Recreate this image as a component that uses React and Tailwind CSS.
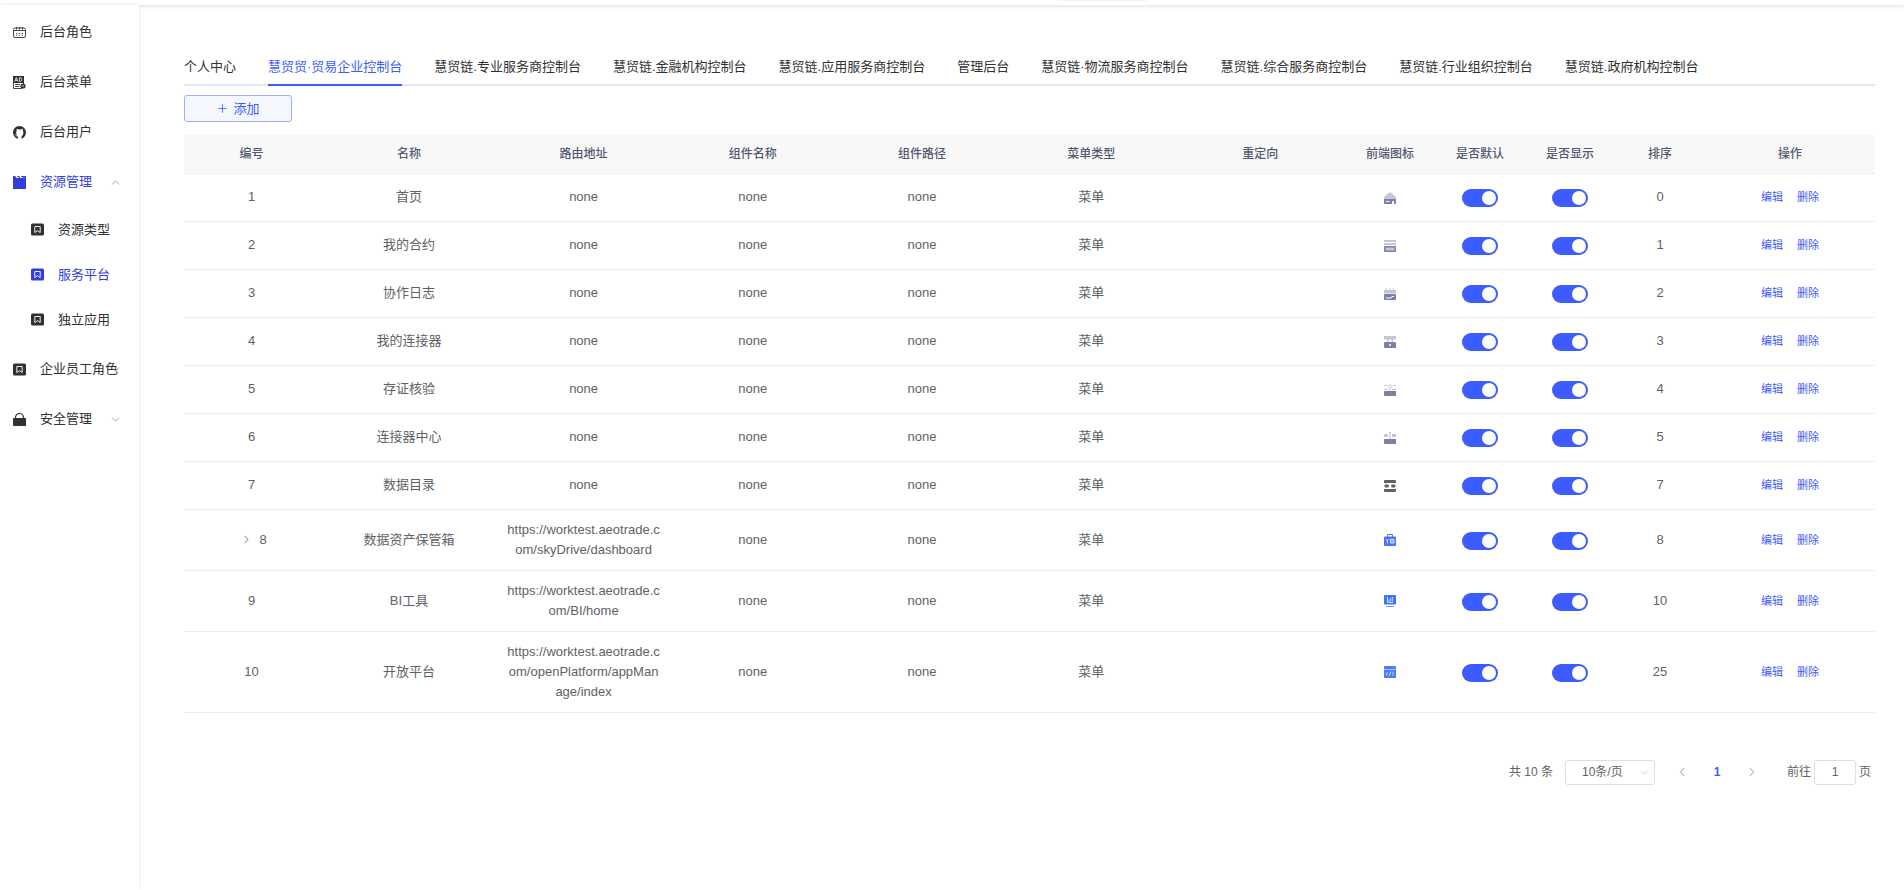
import { useState } from 'react';
import { ChevronDown, ChevronLeft, ChevronRight, ChevronUp, Plus } from 'lucide-react';

const CalendarIcon = () => (
  <svg width="13" height="13" viewBox="0 0 13 13" fill="none" stroke="currentColor">
    <rect x=".5" y="2" width="12" height="9.5" rx="1.5" strokeWidth=".9" />
    <path d="M.5 4.5h12M3.500 1v2.500M6.500 1v2.500M9.500 1v2.500" strokeWidth=".9" />
    <path d="M3 7.500h7M3 9.200h7" strokeWidth=".8" strokeDasharray="1.400 1.400" />
  </svg>
);

const AdIcon = () => (
  <svg width="13" height="13" viewBox="0 0 13 13">
    <path d="M0 0h11v7H0z" fill="currentColor" />
    <path d="M1.800 5.500 3.300 1.500l1.500 4M2.400 4.300h1.900M6.300 1.700v3.600h1.200c1.600 0 1.600-3.600 0-3.600z" fill="none" stroke="#fff" strokeWidth=".8" />
    <path d="M.5 7v5.500H9M2 8.500h5M2 10.500h4.500M10.500 7v1" fill="none" stroke="currentColor" strokeWidth=".9" />
    <circle cx="10" cy="10" r="2.600" fill="currentColor" />
    <path d="M8.800 10h2.400" stroke="#fff" strokeWidth=".8" />
  </svg>
);

const GithubIcon = () => (
  <svg width="13" height="13" viewBox="0 0 16 16" fill="currentColor">
    <path d="M8 0C3.600 0 0 3.600 0 8c0 3.500 2.300 6.500 5.500 7.600.4.1.5-.2.5-.4V12.500c-1-.7-2-2-2.100-4.500 0-1 .3-1.700.8-2.300-.1-.4-.3-1.200.1-2.200 0 0 .8-.2 2 .9a8 8 0 0 1 3 0c1.300-1.100 2-.9 2-.9.5 1 .3 1.800.2 2.200.5.6.8 1.300.8 2.300-.1 2.500-1.100 3.800-2.300 4.500v2.700c0 .2.1.5.5.4C13.700 14.500 16 11.500 16 8c0-4.400-3.600-8-8-8z" />
    <path d="M2.500 10.500c1 0 1.200 1.800 2.800 1.800h1" fill="none" stroke="#fff" />
  </svg>
);

const ClapperIcon = () => (
  <svg width="13" height="13" viewBox="0 0 13 13">
    <path d="M0 0h2l2 2h1L4 0h2l2 2h1L8 0h5v13H0z" fill="currentColor" />
    <path d="M3.500 1.500h8" stroke="#fff" strokeWidth=".8" strokeDasharray="2.500 1" />
  </svg>
);

const BookmarkIcon = () => (
  <svg width="13" height="13" viewBox="0 0 13 13">
    <rect y=".5" width="13" height="12" rx="1.500" fill="currentColor" />
    <path d="M3.800 9.500v-6h5.400v6L6.500 7.700z" fill="none" stroke="#fff" strokeWidth=".9" />
  </svg>
);

const LockIcon = () => (
  <svg width="13" height="13" viewBox="0 0 13 13">
    <rect y="5" width="13" height="8" rx=".8" fill="currentColor" />
    <path d="M2.500 5.500V4.500a4 4 0 0 1 8 0v1" fill="none" stroke="currentColor" strokeWidth="1.200" />
  </svg>
);

const light = '#c3c6d9';
const dark = '#7c81a0';

const rowIcons = {
  home: (
    <>
      <path d="M6 0l6 5v2H0V5z" fill={light} />
      <path d="M0 7h12v4a1 1 0 0 1-1 1h-1V9H8v3H1a1 1 0 0 1-1-1z" fill={dark} />
      <path d="M2 9.500h3.500" stroke="#fff" />
    </>
  ),
  contract: (
    <>
      <path d="M0 0h12v2H0zM0 3h12v2H0z" fill={light} />
      <rect y="6" width="12" height="6" rx="1" fill={dark} />
      <path d="M1.500 7.500h9v3h-9z" fill={light} />
    </>
  ),
  log: (
    <>
      <path d="M0 2h2V0h1v2h2.500V0h1v2H9V0h1v2h2v3.500H0z" fill={light} />
      <rect y="6" width="12" height="6" rx="1" fill={dark} />
      <path d="M2 10h5l1-1.500h2" fill="none" stroke="#fff" />
    </>
  ),
  connector: (
    <>
      <path d="M0 0h12v3.500H0zM3 3h1.500v3H3zM7.500 3H9v3H7.500z" fill={light} />
      <rect y="6" width="12" height="6" rx="1" fill={dark} />
      <path d="M5 8h2v2H5z" fill="#d9dbe8" />
    </>
  ),
  verify: (
    <>
      <path d="M0 1.500h3M9 1.500h3M0 5.500h4M8 5.500h4M6 4v3" stroke={light} />
      <circle cx="6" cy="2.500" r="1.700" fill="none" stroke={light} />
      <path d="M0 7h12v4a1 1 0 0 1-1 1H1a1 1 0 0 1-1-1z" fill={dark} />
    </>
  ),
  center: (
    <>
      <path d="M0 2h4v3H0zM8 2h4v3H8zM5 0h2v1H5zM5 1h.6v4H5zM6.400 1H7v4h-.6zM5.500 5h1v2h-1z" fill={light} />
      <path d="M0 7h12v4a1 1 0 0 1-1 1H1a1 1 0 0 1-1-1z" fill={dark} />
    </>
  ),
  catalog: (
    <>
      <path d="M0 1a1 1 0 0 1 1-1h10a1 1 0 0 1 1 1v2H0zM1 4.500h3.500v3H1zM7.500 4.500H11v3H7.500zM0 9h12v2a1 1 0 0 1-1 1H1a1 1 0 0 1-1-1z" fill="#606266" />
      <path d="M0 6h12" stroke="#606266" />
      <path d="M5 4h2v4H5z" fill="#fff" />
    </>
  ),
  vault: (
    <>
      <path d="M3.500 3V.5h5V3" fill="none" stroke="#4a74f8" />
      <rect y="2.500" width="12" height="9.500" rx="1" fill="#4a74f8" />
      <path d="M2 5l1.300 1.800L4.600 5M3.300 6.800V9.500M6.500 5.500H10V9H6.500zM7.500 7.200h1.500" fill="none" stroke="#e6edff" />
    </>
  ),
  bi: (
    <>
      <rect width="12" height="9.500" rx=".5" fill="#4273fb" />
      <path d="M3.500 2v5.500H9M5 6.500V4.500M6.700 6.500V3M8.400 6.500V2" fill="none" stroke="#d9e4ff" strokeWidth=".9" />
      <path d="M2 11.500h8" stroke="#6d92fb" />
    </>
  ),
  platform: (
    <>
      <rect width="12" height="12" rx="1" fill="#4c7df9" />
      <path d="M0 3.500h12" stroke="#a9c3ff" />
      <path d="M3.800 6 2 7.800l1.800 1.800M8.200 6 10 7.800 8.200 9.600M6.700 5.800l-1.400 4" fill="none" stroke="#dce7ff" strokeWidth=".9" />
    </>
  ),
};

const tabs = [
  '个人中心',
  '慧贸贸·贸易企业控制台',
  '慧贸链.专业服务商控制台',
  '慧贸链.金融机构控制台',
  '慧贸链.应用服务商控制台',
  '管理后台',
  '慧贸链·物流服务商控制台',
  '慧贸链.综合服务商控制台',
  '慧贸链.行业组织控制台',
  '慧贸链.政府机构控制台',
];

const columns = [
  { label: '编号', width: 'w-[135px]' },
  { label: '名称', width: 'w-[180px]' },
  { label: '路由地址', width: '' },
  { label: '组件名称', width: '' },
  { label: '组件路径', width: '' },
  { label: '菜单类型', width: '' },
  { label: '重定向', width: '' },
  { label: '前端图标', width: 'w-[90px]' },
  { label: '是否默认', width: 'w-[90px]' },
  { label: '是否显示', width: 'w-[90px]' },
  { label: '排序', width: 'w-[90px]' },
  { label: '操作', width: 'w-[170px]' },
];

const rows = [
  { id: 1, name: '首页', path: 'none', icon: 'home', sort: 0 },
  { id: 2, name: '我的合约', path: 'none', icon: 'contract', sort: 1 },
  { id: 3, name: '协作日志', path: 'none', icon: 'log', sort: 2 },
  { id: 4, name: '我的连接器', path: 'none', icon: 'connector', sort: 3 },
  { id: 5, name: '存证核验', path: 'none', icon: 'verify', sort: 4 },
  { id: 6, name: '连接器中心', path: 'none', icon: 'center', sort: 5 },
  { id: 7, name: '数据目录', path: 'none', icon: 'catalog', sort: 7 },
  { id: 8, name: '数据资产保管箱', path: 'https://worktest.aeotrade.com/skyDrive/dashboard', icon: 'vault', sort: 8, expandable: true },
  { id: 9, name: 'BI工具', path: 'https://worktest.aeotrade.com/BI/home', icon: 'bi', sort: 10 },
  { id: 10, name: '开放平台', path: 'https://worktest.aeotrade.com/openPlatform/appManage/index', icon: 'platform', sort: 25 },
];

const MenuItem = ({ icon, label, active, arrow }) => {
  const Arrow = arrow === 'up' ? ChevronUp : ChevronDown;
  return (
    <a
      href="#"
      className={`relative flex h-[50px] items-center gap-3.5 pl-[13px] whitespace-nowrap ${active ? 'text-[#303fdb]' : 'text-[#303133]'}`}
    >
      {icon}
      <span>{label}</span>
      {arrow && <Arrow size={13} strokeWidth={1.5} className="absolute right-[17px] text-[#909399]" />}
    </a>
  );
};

const SubMenuItem = ({ label, active }) => (
  <a
    href="#"
    className={`flex h-[45px] items-center gap-3.5 pl-[31px] ${active ? 'text-[#303fdb]' : 'text-[#303133]'}`}
  >
    <BookmarkIcon />
    <span>{label}</span>
  </a>
);

const Sidebar = () => (
  <nav className="z-20 w-[139px] shrink-0 bg-white pt-0.5 shadow-[0_0_5px_rgba(0,0,0,0.1)]">
    <MenuItem icon={<CalendarIcon />} label="后台角色" />
    <MenuItem icon={<AdIcon />} label="后台菜单" />
    <MenuItem icon={<GithubIcon />} label="后台用户" />
    <MenuItem icon={<ClapperIcon />} label="资源管理" active arrow="up" />
    <div className="pb-0.5">
      <SubMenuItem label="资源类型" />
      <SubMenuItem label="服务平台" active />
      <SubMenuItem label="独立应用" />
    </div>
    <MenuItem icon={<BookmarkIcon />} label="企业员工角色" arrow="down" />
    <MenuItem icon={<LockIcon />} label="安全管理" arrow="down" />
  </nav>
);

const Switch = ({ label }) => {
  const [on, setOn] = useState(true);
  return (
    <button
      type="button"
      role="switch"
      aria-checked={on}
      aria-label={label}
      onClick={() => setOn(!on)}
      className={`mt-0.5 inline-flex h-[18px] w-9 items-center rounded-full px-0.5 align-middle ${on ? 'justify-end bg-[#3d5cff]' : 'justify-start bg-[#dcdfe6]'}`}
    >
      <span className="size-3.5 rounded-full bg-white" />
    </button>
  );
};

const MenuTable = () => (
  <table className="mt-[13px] w-full table-fixed border-collapse text-center text-[13px] leading-5 text-[#606266]">
    <thead>
      <tr className="h-[38px] border-b border-[#ebeef5] bg-[#f8f8f9] text-xs text-[#515a6e]">
        {columns.map((col) => (
          <th key={col.label} className={`font-medium ${col.width}`}>
            {col.label}
          </th>
        ))}
      </tr>
    </thead>
    <tbody>
      {rows.map((row) => (
        <tr key={row.id} className="h-12 border-b border-[#ebeef5]">
          <td>
            {row.expandable && (
              <button type="button" aria-label="展开" className="mr-1.5 ml-1 align-[-2px]">
                <ChevronRight size={13} strokeWidth={1.5} />
              </button>
            )}
            {row.id}
          </td>
          <td>{row.name}</td>
          <td className="px-[7px] py-2.5 break-all">{row.path}</td>
          <td>none</td>
          <td>none</td>
          <td>菜单</td>
          <td></td>
          <td>
            <svg width="12" height="12" viewBox="0 0 12 12" className="inline-block">
              {rowIcons[row.icon]}
            </svg>
          </td>
          <td>
            <Switch label={`${row.name} 是否默认`} />
          </td>
          <td>
            <Switch label={`${row.name} 是否显示`} />
          </td>
          <td>{row.sort}</td>
          <td>
            <div className="flex justify-center gap-3.5 text-[11px] text-[#3d5cff]">
              <button type="button">编辑</button>
              <button type="button">删除</button>
            </div>
          </td>
        </tr>
      ))}
    </tbody>
  </table>
);

const Pagination = () => (
  <div className="mt-[47px] flex items-center justify-end pr-1 text-xs text-[#606266]">
    <span>共 10 条</span>
    <div className="relative ml-3 flex items-center">
      <select
        aria-label="每页条数"
        className="h-[25px] w-[90px] appearance-none rounded-[3px] border border-[#dcdfe6] bg-white pl-4"
      >
        <option>10条/页</option>
        <option>20条/页</option>
      </select>
      <ChevronDown size={13} strokeWidth={1.5} className="pointer-events-none absolute right-1 text-[#c0c4cc]" />
    </div>
    <button type="button" aria-label="上一页" className="ml-5 text-[#c0c4cc]">
      <ChevronLeft size={14} />
    </button>
    <button type="button" className="mx-[22px] w-3 font-bold text-[#3d5cff]">1</button>
    <button type="button" aria-label="下一页" className="text-[#c0c4cc]">
      <ChevronRight size={14} />
    </button>
    <label htmlFor="page" className="ml-7">前往</label>
    <input
      id="page"
      defaultValue="1"
      className="mx-[3px] h-[25px] w-[42px] rounded-[3px] border border-[#dcdfe6] text-center"
    />
    <span>页</span>
  </div>
);

const App = () => {
  const [active, setActive] = useState(1);

  return (
    <div className="flex min-h-screen flex-col bg-white font-['Liberation_Sans','Noto_Sans_CJK_SC',sans-serif] text-[13px]">
      <header className="z-10 h-[5px] shrink-0 bg-white shadow-[0_1px_4px_rgba(0,0,0,0.14)]">
        <div className="ml-[55.5%] h-px w-[90px] rounded-b bg-[#f3f3ff]" />
      </header>
      <div className="flex flex-1">
        <Sidebar />
        <main className="min-w-0 flex-1 pt-[45px] pr-[29px] pl-[45px]">
          <div role="tablist" className="flex gap-8 border-b-2 border-[#e4e7ed]">
            {tabs.map((tab, i) => (
              <button
                key={tab}
                type="button"
                role="tab"
                aria-selected={i === active}
                onClick={() => setActive(i)}
                className={`-mb-0.5 h-9 border-b-2 whitespace-nowrap ${i === active ? 'border-[#3d5cff] text-[#3d5cff]' : 'border-transparent text-[#303133]'}`}
              >
                {tab}
              </button>
            ))}
          </div>
          <button
            type="button"
            className="mt-[9px] flex h-[27px] w-[108px] items-center justify-center gap-1 rounded-[3px] border border-[#9eaeff] bg-[#f5f7ff] text-[#3d5cff]"
          >
            <Plus size={13} strokeWidth={1.5} />
            添加
          </button>
          <MenuTable />
          <Pagination />
        </main>
      </div>
    </div>
  );
};

export default App;
